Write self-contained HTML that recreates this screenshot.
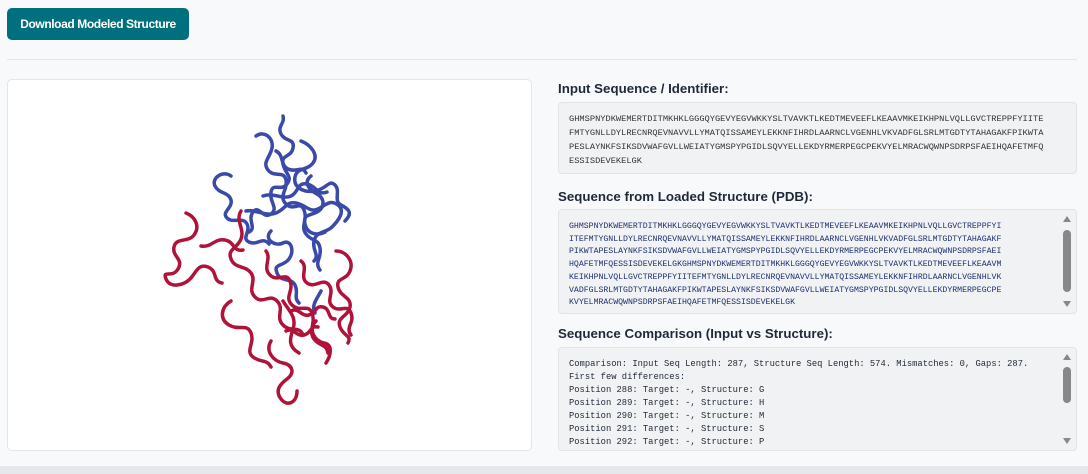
<!DOCTYPE html>
<html><head><meta charset="utf-8"><style>
*{box-sizing:border-box;margin:0;padding:0}
body{width:1088px;height:474px;overflow:hidden;background:#f8f9fb;font-family:"Liberation Sans",sans-serif;position:relative}
.btn{position:absolute;left:7px;top:8px;width:182px;height:32px;background:#00707e;color:#fff;border-radius:5px;font-size:12px;font-weight:bold;line-height:32px;text-align:center;letter-spacing:-0.4px}
.hr{position:absolute;left:7px;top:59px;width:1070px;height:1px;background:#e3e5e9}
.panel{position:absolute;left:7px;top:79px;width:525px;height:372px;background:#fff;border:1px solid #e3e5e9;border-radius:5px}
h3{position:absolute;left:558px;font-size:13.3px;color:#1f2937;font-weight:bold}
.box{position:absolute;left:558px;width:519px;background:#f1f2f4;border:1px solid #e1e4e8;border-radius:4px;font-family:"Liberation Mono",monospace;color:#333;white-space:pre;padding:9px 0 0 10px}
.sb{position:absolute;right:4px;top:4px;bottom:4px;width:10px}
.sb .t{position:absolute;left:1px;width:8px;background:#888;border-radius:4px}
.up,.dn{position:absolute;left:1px;width:0;height:0;border-left:4px solid transparent;border-right:4px solid transparent}
.up{top:2px;border-bottom:6px solid #888}.dn{bottom:2px;border-top:6px solid #888}
.bottom{position:absolute;left:0;top:466px;width:1088px;height:8px;background:#e6e7ea}
</style></head><body>
<div class="btn">Download Modeled Structure</div>
<div class="hr"></div>
<div class="panel">
<svg width="525" height="372" viewBox="7 79 525 372" style="position:absolute;left:0;top:0" fill="none" stroke-linecap="round">
<g stroke="#3a4aa8" stroke-width="3.5">
<path d="M282 115c2 8-6 10-2 18s14 4 12 14-12 6-10 16 10 12 4 20-14-2-16 8 8 16 0 22-12-10-18-2 4 16-4 20"/>
<path d="M255 135c8-6 18 2 16 12s-10 14-4 22 16 0 18 10-8 16 0 24 14-4 18 6-4 16 2 24 12 4 14 14-6 14 0 22"/>
<path d="M230 175c-8-6-20 2-16 10s14 6 16 14 -10 12-4 18 16-2 20 6 -6 14 2 18 14-6 20 2"/>
<path d="M300 140c10 4 18 14 12 22s-16 4-18 14 8 16 20 14 14-12 20-6 -2 16 6 20 12 8 4 16"/>
<path d="M245 210c10-2 20 6 30 2s10-12 20-10 14 10 22 6 12-10 20-4 0 16-6 22-16 4-18 14 6 14 0 20"/>
<path d="M270 230c-8 8 4 16 12 12s12 8 6 16-16 4-12 14 14 4 18 12-2 12 4 18"/>
<path d="M310 175c-8 6 -2 14 6 18s8 14 0 18-14 2-12 12 12 12 20 8"/>
<path d="M262 195c10-4 20 4 28 0s6-14 16-12 10 12 20 8"/>
<path d="M275 150c8 4 4 14 12 18s14-4 18 4"/>
<path d="M320 290c-4 8 -10 14-6 22"/>
</g>
<g stroke="#b0133a" stroke-width="3.5">
<path d="M185 212c10 4 14 14 8 22s-18 2-20 12 10 12 4 22 -16 0-12 10 18 6 24 0 8-16 18-12 4 14 14 16"/>
<path d="M240 210c-6 10 4 18 0 28s-14 10-10 20 14 6 20 14-4 16 4 24 14-4 22 4-2 16 6 24 16 0 20 10"/>
<path d="M265 250c6 8-4 16 4 24s16-4 20 6-6 16 2 24 16-2 20 8-4 18 2 26 12 4 14 14"/>
<path d="M300 260c8 6-2 16 6 22s16-6 22 2-4 16 4 22 14-4 18 6-6 14 0 22"/>
<path d="M335 250c10 0 18 10 14 20s-14 6-12 16 14 10 12 20 -14 10-10 20 12 8 8 16"/>
<path d="M230 300c-10 6-12 18-2 24s18-2 22 8-6 18 2 24 14 2 18 10"/>
<path d="M270 340c-6 10 2 20 12 22s12 10 4 16-12 12-6 20 16 4 16-8"/>
<path d="M282 300c6 10 14 16 10 28s-4 18 6 24"/>
<path d="M315 320c-8 8-2 20 8 22s6 14 2 20"/>
<path d="M290 310c8-4 10 6 18 4s6-10 14-8 4 12 12 12"/>
<path d="M285 330c8-4 10 6 18 4s6-10 14-8"/>
<path d="M200 245c10 2 14-8 24-6s8 12 18 10"/>
</g>
</svg>
</div>
<h3 style="top:81px">Input Sequence / Identifier:</h3>
<div class="box" style="top:102px;height:72px;font-size:8.7px;line-height:14px">GHMSPNYDKWEMERTDITMKHKLGGGQYGEVYEGVWKKYSLTVAVKTLKEDTMEVEEFLKEAAVMKEIKHPNLVQLLGVCTREPPFYIITE
FMTYGNLLDYLRECNRQEVNAVVLLYMATQISSAMEYLEKKNFIHRDLAARNCLVGENHLVKVADFGLSRLMTGDTYTAHAGAKFPIKWTA
PESLAYNKFSIKSDVWAFGVLLWEIATYGMSPYPGIDLSQVYELLEKDYRMERPEGCPEKVYELMRACWQWNPSDRPSFAEIHQAFETMFQ
ESSISDEVEKELGK</div>
<h3 style="top:189px">Sequence from Loaded Structure (PDB):</h3>
<div class="box" style="top:209px;height:105px;font-size:8.2px;line-height:12.7px;color:#1e3070;padding-top:11px">GHMSPNYDKWEMERTDITMKHKLGGGQYGEVYEGVWKKYSLTVAVKTLKEDTMEVEEFLKEAAVMKEIKHPNLVQLLGVCTREPPFYI
ITEFMTYGNLLDYLRECNRQEVNAVVLLYMATQISSAMEYLEKKNFIHRDLAARNCLVGENHLVKVADFGLSRLMTGDTYTAHAGAKF
PIKWTAPESLAYNKFSIKSDVWAFGVLLWEIATYGMSPYPGIDLSQVYELLEKDYRMERPEGCPEKVYELMRACWQWNPSDRPSFAEI
HQAFETMFQESSISDEVEKELGKGHMSPNYDKWEMERTDITMKHKLGGGQYGEVYEGVWKKYSLTVAVKTLKEDTMEVEEFLKEAAVM
KEIKHPNLVQLLGVCTREPPFYIITEFMTYGNLLDYLRECNRQEVNAVVLLYMATQISSAMEYLEKKNFIHRDLAARNCLVGENHLVK
VADFGLSRLMTGDTYTAHAGAKFPIKWTAPESLAYNKFSIKSDVWAFGVLLWEIATYGMSPYPGIDLSQVYELLEKDYRMERPEGCPE
KVYELMRACWQWNPSDRPSFAEIHQAFETMFQESSISDEVEKELGK<div class="sb"><div class="up"></div><div class="t" style="top:16px;height:62px"></div><div class="dn"></div></div></div>
<h3 style="top:326px">Sequence Comparison (Input vs Structure):</h3>
<div class="box" style="top:347px;height:104px;font-size:8.8px;line-height:13px;color:#1f2937;padding-top:10px">Comparison: Input Seq Length: 287, Structure Seq Length: 574. Mismatches: 0, Gaps: 287.
First few differences:
Position 288: Target: -, Structure: G
Position 289: Target: -, Structure: H
Position 290: Target: -, Structure: M
Position 291: Target: -, Structure: S
Position 292: Target: -, Structure: P<div class="sb"><div class="up"></div><div class="t" style="top:15px;height:36px"></div><div class="dn"></div></div></div>
<div class="bottom"></div>
</body></html>
